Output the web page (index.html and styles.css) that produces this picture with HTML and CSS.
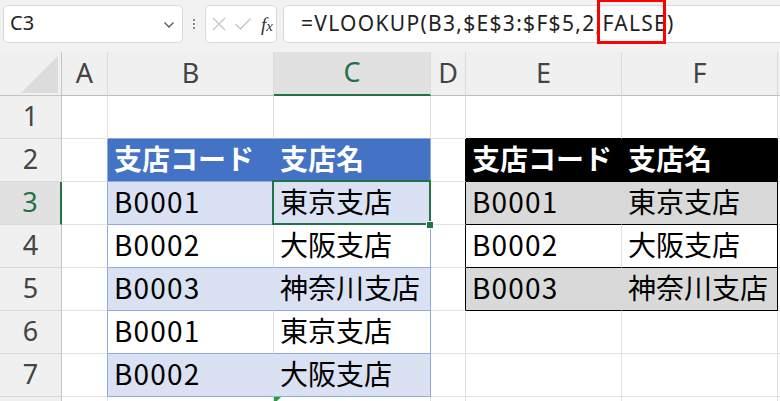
FILE: index.html
```html
<!DOCTYPE html>
<html lang="ja">
<head>
<meta charset="utf-8">
<link rel="stylesheet" href="styles.css">
</head>
<body>
<div class="app">
  <div class="toolbar">
    <div class="namebox">
      <span class="name">C3</span>
      <svg class="chev" width="12" height="8" viewBox="0 0 12 8"><path d="M1.5 1.5 L6 6 L10.5 1.5" fill="none" stroke="#555" stroke-width="1.3"/></svg>
    </div>
    <div class="grip"><i></i><i></i><i></i></div>
    <div class="fxbox">
      <svg width="16" height="16" viewBox="0 0 16 16"><path d="M2 2 L14 14 M14 2 L2 14" stroke="#c4c4c4" stroke-width="1.3" fill="none"/></svg>
      <svg width="18" height="14" viewBox="0 0 18 14"><path d="M1.5 7 L6.5 12 L16.5 1.5" stroke="#c4c4c4" stroke-width="1.3" fill="none"/></svg>
      <span class="fx">f<span class="fxx">x</span></span>
    </div>
    <div class="formula"><span class="ftext">=VLOOKUP(B3,$E$3:$F$5,2,FALSE)</span></div>
    <div class="mark"></div>
  </div>
  <div class="sheet">
    <div class="corner"><svg width="37" height="37" viewBox="0 0 37 37"><path d="M37 0 L37 37 L0 37 Z" fill="#dcdcdc"/></svg></div>
    <div class="h">A</div>
    <div class="h">B</div>
    <div class="h hsel">C</div>
    <div class="h">D</div>
    <div class="h">E</div>
    <div class="h">F</div>
    <div class="h hlast"></div>

    <div class="r">1</div>
    <div class="c"></div>
    <div class="c tb-top"></div>
    <div class="c tb-top"></div>
    <div class="c"></div>
    <div class="c kb-top"></div>
    <div class="c kb-top"></div>
    <div class="c"></div>

    <div class="r">2</div>
    <div class="c tb-left"></div>
    <div class="c th">支店コード</div>
    <div class="c th tb-right">支店名</div>
    <div class="c kb-left"></div>
    <div class="c kh">支店コード</div>
    <div class="c kh kb-right">支店名</div>
    <div class="c"></div>

    <div class="r rsel">3</div>
    <div class="c tb-left"></div>
    <div class="c band code">B0001</div>
    <div class="c band tb-right sel">東京支店<span class="handle"></span></div>
    <div class="c kb-left"></div>
    <div class="c kg code">B0001</div>
    <div class="c kg kb-right">東京支店</div>
    <div class="c"></div>

    <div class="r">4</div>
    <div class="c tb-left"></div>
    <div class="c plain code">B0002</div>
    <div class="c plain tb-right">大阪支店</div>
    <div class="c kb-left"></div>
    <div class="c kw code">B0002</div>
    <div class="c kw kb-right">大阪支店</div>
    <div class="c"></div>

    <div class="r">5</div>
    <div class="c tb-left"></div>
    <div class="c band code">B0003</div>
    <div class="c band tb-right">神奈川支店</div>
    <div class="c kb-left"></div>
    <div class="c kg code">B0003</div>
    <div class="c kg kb-right">神奈川支店</div>
    <div class="c"></div>

    <div class="r">6</div>
    <div class="c tb-left"></div>
    <div class="c plain code">B0001</div>
    <div class="c plain tb-right">東京支店</div>
    <div class="c"></div>
    <div class="c"></div>
    <div class="c"></div>
    <div class="c"></div>

    <div class="r">7</div>
    <div class="c tb-left"></div>
    <div class="c band code">B0002</div>
    <div class="c band tb-right">大阪支店</div>
    <div class="c"></div>
    <div class="c"></div>
    <div class="c"></div>
    <div class="c"></div>

    <div class="r"></div>
    <div class="c"></div>
    <div class="c"></div>
    <div class="c err"></div>
    <div class="c"></div>
    <div class="c"></div>
    <div class="c"></div>
    <div class="c"></div>
  </div>
</div>
</body>
</html>
```

FILE: styles.css
```css
html, body {
  margin: 0;
  padding: 0;
  overflow: hidden;
  background: #ffffff;
}

.app {
  width: 780px;
  height: 401px;
  overflow: hidden;
}

.toolbar {
  position: relative;
  height: 52px;
  box-sizing: border-box;
  padding: 5px 0 0 3px;
  background: #f2f2f2;
  display: flex;
  align-items: flex-start;
  font-family: "Noto Sans", "Open Sans", sans-serif;
}

.namebox {
  width: 180px;
  height: 38px;
  box-sizing: border-box;
  background: #ffffff;
  border: 1px solid #d9d9d9;
  border-radius: 5px;
  display: flex;
  align-items: center;
  justify-content: space-between;
  padding: 0 7px 0 6px;
  color: #222;
  font-size: 20px;
}

.name {
  line-height: 1;
  margin-top: -2px;
}

.chev {
  margin-top: 2px;
}

.grip {
  width: 22px;
  height: 38px;
  display: flex;
  flex-direction: column;
  align-items: center;
  justify-content: center;
  gap: 2px;
}

.grip i {
  display: block;
  width: 2px;
  height: 2px;
  background: #8a8a8a;
}

.fxbox {
  width: 72px;
  height: 38px;
  box-sizing: border-box;
  background: #ffffff;
  border: 1px solid #d9d9d9;
  border-radius: 5px;
  display: flex;
  align-items: center;
  padding-left: 5px;
  gap: 7px;
}

.fx {
  font-family: "Liberation Serif", "DejaVu Serif", serif;
  font-style: italic;
  font-size: 19px;
  color: #333;
  margin-left: 2px;
  line-height: 1;
}

.fxx {
  font-size: 15px;
}

.formula {
  flex: 1;
  margin-left: 6px;
  margin-right: -12px;
  height: 38px;
  box-sizing: border-box;
  background: #ffffff;
  border: 1px solid #d9d9d9;
  border-radius: 5px;
  display: flex;
  align-items: center;
  padding-left: 17px;
  font-size: 21px;
  letter-spacing: 1.3px;
  color: #222;
}

.ftext {
  margin-top: -2px;
}

.mark {
  position: absolute;
  left: 597px;
  top: -1px;
  width: 69px;
  height: 45px;
  box-sizing: border-box;
  border: 3px solid #ff0000;
}

.sheet {
  display: grid;
  grid-template-columns: 62px 46px 166px 157px 35px 156px 156px 1fr;
  grid-template-rows: 44px repeat(8, 43px);
}

.corner {
  background: #f0f0f0;
  border-right: 1px solid #c4c4c4;
  border-bottom: 1px solid #c4c4c4;
  display: flex;
  align-items: flex-end;
  justify-content: flex-end;
  padding: 0 3px 2px 0;
  box-sizing: border-box;
}

.h {
  background: #f0f0f0;
  border-right: 1px solid #dadada;
  border-bottom: 1px solid #bdbdbd;
  display: flex;
  align-items: center;
  justify-content: center;
  font-family: "Noto Sans", "Open Sans", sans-serif;
  font-size: 27px;
  color: #444;
  box-sizing: border-box;
  padding-bottom: 3px;
}

.hlast {
  border-right: none;
}

.hsel {
  background: #e1e1e1;
  color: #217346;
  border-bottom: 2px solid #217346;
}

.r {
  background: #f0f0f0;
  border-right: 1px solid #c4c4c4;
  border-bottom: 1px solid #dadada;
  display: flex;
  align-items: center;
  justify-content: center;
  font-family: "Noto Sans", "Open Sans", sans-serif;
  font-size: 27px;
  color: #444;
  box-sizing: border-box;
  padding-bottom: 3px;
}

.rsel {
  background: #e1e1e1;
  color: #217346;
  border-right: 2px solid #217346;
}

.c {
  position: relative;
  border-right: 1px solid #e1e1e1;
  border-bottom: 1px solid #e1e1e1;
  box-sizing: border-box;
  display: flex;
  align-items: center;
  padding: 0 0 5px 6px;
  font-family: "Noto Sans CJK JP", "Noto Sans", sans-serif;
  font-size: 28px;
  color: #000;
  white-space: nowrap;
}

.code {
  letter-spacing: 1.2px;
}

.tb-top {
  border-bottom-color: #8ea9db;
}

.tb-left {
  border-right-color: #8ea9db;
}

.tb-right {
  border-right-color: #8ea9db;
}

.th {
  background: #4472c4;
  color: #ffffff;
  font-weight: 700;
  border-right-color: #4472c4;
  border-bottom-color: #8ea9db;
}

.th.tb-right {
  border-right-color: #8ea9db;
}

.band {
  background: #d9e1f2;
  border-right-color: #d9e1f2;
  border-bottom-color: #8ea9db;
}

.band.tb-right {
  border-right-color: #8ea9db;
}

.plain {
  border-bottom-color: #8ea9db;
}

.plain.tb-right {
  border-right-color: #8ea9db;
}

.kb-top {
  border-bottom-color: #000;
}

.kb-left {
  border-right-color: #000;
}

.kh {
  background: #000;
  color: #fff;
  font-weight: 700;
  border-right-color: #000;
  border-bottom-color: #000;
}

.kg {
  background: #d9d9d9;
  border-right-color: #d9d9d9;
  border-bottom-color: #000;
}

.kw {
  border-bottom-color: #000;
}

.kb-right {
  border-right-color: #000;
}

.sel::after {
  content: "";
  position: absolute;
  left: -2px;
  top: -2px;
  right: -1px;
  bottom: -1px;
  border: 2px solid #217346;
  pointer-events: none;
}

.handle {
  position: absolute;
  right: -3px;
  bottom: -4px;
  width: 6px;
  height: 6px;
  background: #217346;
  box-shadow: 0 0 0 1px #ffffff;
  z-index: 2;
}

.err::before {
  content: "";
  position: absolute;
  left: 0;
  top: 0;
  width: 0;
  height: 0;
  border-top: 7px solid #21a146;
  border-right: 7px solid transparent;
}
```
